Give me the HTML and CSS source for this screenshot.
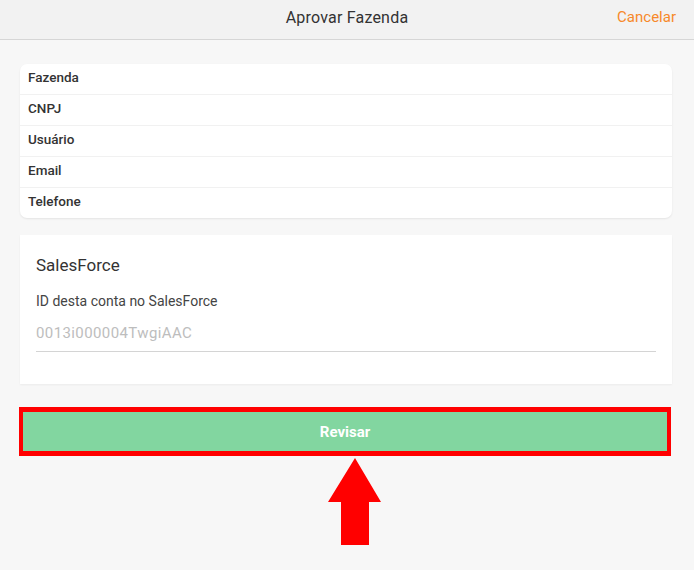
FILE: index.html
```html
<!DOCTYPE html>
<html lang="pt-BR">
<head>
<meta charset="utf-8">
<title>Aprovar Fazenda</title>
<link rel="stylesheet" href="styles.css">
</head>
<body>
<header class="topbar">
  <div class="topbar-title">Aprovar Fazenda</div>
  <a class="topbar-cancel" href="#">Cancelar</a>
</header>
<main class="content">
  <section class="list-card">
    <div class="list-row">Fazenda</div>
    <div class="list-row">CNPJ</div>
    <div class="list-row">Usuário</div>
    <div class="list-row">Email</div>
    <div class="list-row">Telefone</div>
  </section>
  <section class="sf-card">
    <h2 class="sf-title">SalesForce</h2>
    <label class="sf-label">ID desta conta no SalesForce</label>
    <div class="sf-input">0013i000004TwgiAAC</div>
  </section>
  <div class="btn-frame">
    <button class="btn-review">Revisar</button>
  </div>
  <div class="arrow-wrap">
    <svg class="arrow" width="54" height="88" viewBox="0 0 54 88">
      <polygon points="27,0 53,44 41,44 41,87 13,87 13,44 0,44" fill="#ff0000"/>
    </svg>
  </div>
</main>
</body>
</html>
```
FILE: styles.css
```css
* { box-sizing: border-box; }
html, body { margin: 0; padding: 0; }
body {
  width: 694px;
  height: 570px;
  overflow: hidden;
  background: #f7f7f7;
  font-family: Roboto, "Liberation Sans", sans-serif;
  color: #333;
}
.topbar {
  height: 40px;
  background: #f2f2f2;
  border-bottom: 1px solid #d6d6d6;
  display: flex;
  align-items: center;
  justify-content: center;
  position: relative;
}
.topbar-title {
  font-size: 16px;
  color: #333;
  letter-spacing: 0.2px;
  margin-top: -4px;
}
.topbar-cancel {
  position: absolute;
  right: 18px;
  top: 8px;
  font-size: 15px;
  color: #f7892a;
  text-decoration: none;
}
.content {
  padding: 24px 22px 0 20px;
}
.list-card {
  background: #fff;
  border-radius: 7px;
  box-shadow: 0 1px 2px rgba(0,0,0,0.08);
}
.list-row {
  height: 31px;
  padding: 5px 8px 0;
  font-size: 13.5px;
  font-weight: 500;
  color: #333;
  border-bottom: 1px solid #f1f1f1;
}
.list-row:last-child { border-bottom: none; height: 30px; }
.sf-card {
  margin-top: 17px;
  background: #fff;
  height: 149px;
  padding: 19px 16px 0;
  box-shadow: 0 1px 2px rgba(0,0,0,0.05);
}
.sf-title {
  margin: 0;
  font-size: 17px;
  font-weight: 400;
  color: #333;
  line-height: 22px;
}
.sf-label {
  display: block;
  margin-top: 16px;
  font-size: 14px;
  color: #444;
  line-height: 18px;
}
.sf-input {
  margin-top: 14px;
  font-size: 15px;
  letter-spacing: 0.4px;
  color: #bdbdbd;
  line-height: 18px;
  padding-bottom: 9px;
  border-bottom: 1px solid #d4d4d4;
}
.btn-frame {
  margin-top: 23px;
  margin-left: -1px;
  margin-right: 1px;
  border: 5px solid #ff0000;
  border-left-width: 4px;
  border-right-width: 4px;
}
.btn-review {
  display: block;
  width: 100%;
  height: 39px;
  border: none;
  background: #82d6a0;
  color: #fff;
  font-family: Roboto, "Liberation Sans", sans-serif;
  font-size: 15px;
  font-weight: 700;
  padding: 0;
}
.arrow-wrap {
  padding-left: 308px;
  padding-top: 2px;
}
.arrow { display: block; }
```
